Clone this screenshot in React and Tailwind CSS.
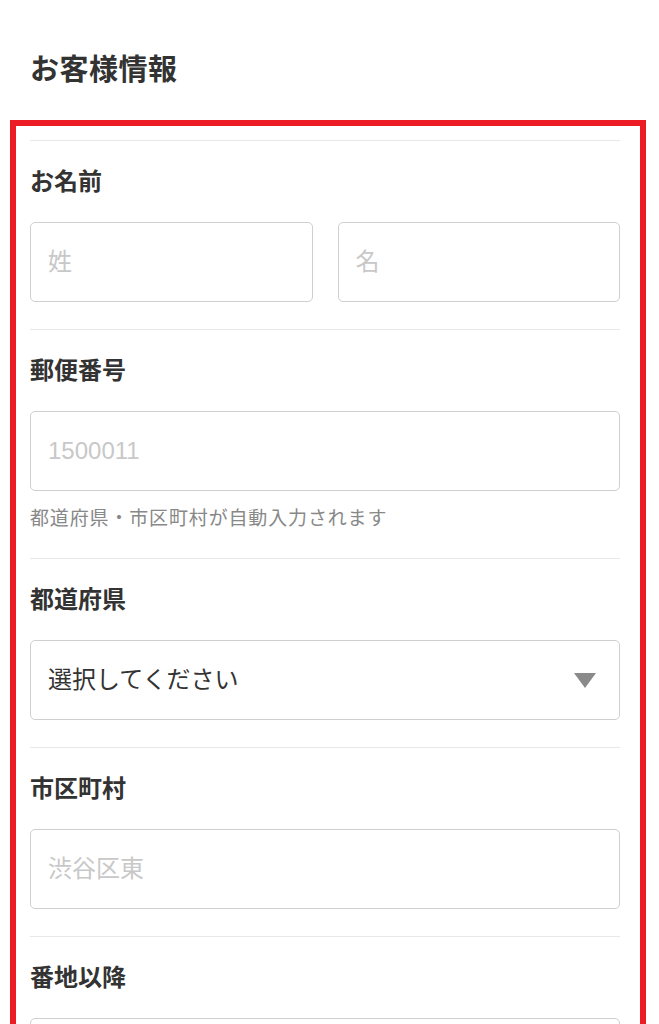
import { useState } from 'react'

const FONT = "font-['Liberation_Sans','Noto_Sans_CJK_JP',sans-serif]"

function Field({ label, children, note }) {
  return (
    <section className="border-t border-[#e8e8e8] pt-[25px] pb-[27px]">
      <h3 className="text-[24px] leading-[32px] font-bold text-[#333]">{label}</h3>
      <div className="mt-[24px]">{children}</div>
      {note && (
        <p className="mt-[14px] -mb-[2px] text-[19px] leading-[28px] tracking-[0.85px] text-[#888]">{note}</p>
      )}
    </section>
  )
}

function TextInput({ placeholder }) {
  const [value, setValue] = useState('')
  return (
    <input
      type="text"
      value={value}
      onChange={e => setValue(e.target.value)}
      placeholder={placeholder}
      className="block w-full min-w-0 h-[80px] px-[17px] rounded-[5px] border border-[#cfcfcf] bg-white text-[24px] text-[#333] placeholder:text-[#c8c8c8] outline-none"
    />
  )
}

function PrefectureSelect() {
  return (
    <div className="flex items-center justify-between h-[80px] pl-[17px] pr-[23px] rounded-[5px] border border-[#cfcfcf] bg-white">
      <span className="text-[24px] text-[#333]">選択してください</span>
      <svg width="22" height="15" viewBox="0 0 22 15" aria-hidden="true">
        <polygon points="0,0 22,0 11,15" fill="#8a8a8a" />
      </svg>
    </div>
  )
}

export default function App() {
  return (
    <div className={`min-h-screen bg-white ${FONT}`}>
      <header className="pl-[30px] pt-[52px] pb-[32px]">
        <h2 className="text-[29px] leading-[36px] font-bold text-[#333] tracking-[0.5px]">お客様情報</h2>
      </header>

      <div className="ml-[10px] w-[636px] border-[6px] border-[#ec1c24] pl-[14px] pr-[20px] pt-[14px] pb-[40px]">
        <Field label="お名前">
          <div className="flex gap-[25px]">
            <TextInput placeholder="姓" />
            <TextInput placeholder="名" />
          </div>
        </Field>

        <Field label="郵便番号" note="都道府県・市区町村が自動入力されます">
          <TextInput placeholder="1500011" />
        </Field>

        <Field label="都道府県">
          <PrefectureSelect />
        </Field>

        <Field label="市区町村">
          <TextInput placeholder="渋谷区東" />
        </Field>

        <Field label="番地以降">
          <TextInput placeholder="" />
        </Field>
      </div>
    </div>
  )
}
